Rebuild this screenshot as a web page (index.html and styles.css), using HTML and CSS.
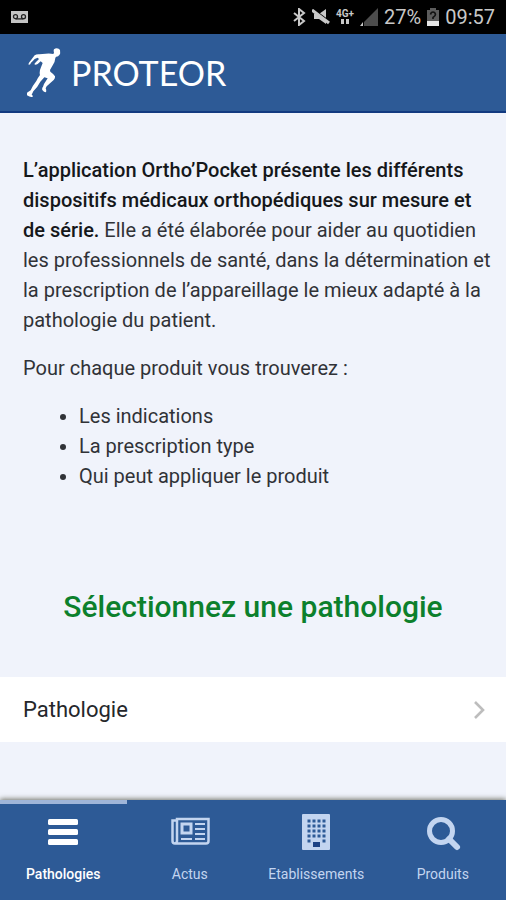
FILE: index.html
```html
<!DOCTYPE html>
<html lang="fr">
<head>
    <meta charset="UTF-8">
    <meta name="viewport" content="width=device-width, initial-scale=1.0">
    <title>Ortho'Pocket</title>
    <link rel="stylesheet" href="styles.css">
</head>
<body>
    <div class="status-bar">
        <svg class="voicemail" width="17" height="12" viewBox="0 0 17 12">
            <rect width="17" height="12" fill="#c4c4c4"/>
            <g fill="none" stroke="#222" stroke-width="1.3">
                <circle cx="4.5" cy="5.7" r="2"/>
                <circle cx="12.5" cy="5.7" r="2"/>
                <path d="M4.5 7.9h8"/>
            </g>
        </svg>
        <div class="status-icons">
            <svg width="13" height="18" viewBox="0 0 13 18">
                <path d="M1 5l10 8-5 4V1l5 4-10 8" fill="none" stroke="#c8c8c8" stroke-width="2"/>
            </svg>
            <svg class="mute" width="18" height="16" viewBox="0 0 18 16">
                <path d="M2 5h5l7-5v15l-7-5H2z" fill="#c8c8c8"/>
                <path d="M2 1l16 12" stroke="#000" stroke-width="2"/>
                <path d="M0 1l17 13" stroke="#c8c8c8" stroke-width="3"/>
            </svg>
            <div class="network">
                <span>4G+</span>
                <svg width="10" height="6" viewBox="0 0 10 6">
                    <path d="M1 0h3v5H1zM6 0h3v5H6z" fill="#c8c8c8"/>
                </svg>
            </div>
            <svg class="signal" width="18" height="18" viewBox="0 0 18 18">
                <path d="M18 0v18H4V14z" fill="#4c4c4c"/>
                <path d="M3 14v4H0z" fill="#c8c8c8"/>
            </svg>
            <span class="status-text">27%</span>
            <svg class="battery" width="12" height="18" viewBox="0 0 12 18">
                <path d="M3 0h6v2h3v16H0V2h3z" fill="#5c5c5c"/>
                <path d="M0 13h12v5H0z" fill="#e6e6e6"/>
                <path d="M3.500 6.500Q4 4 6 4t2.500 2.300Q8.500 8 6 9.500V11" fill="none" stroke="#111" stroke-width="1.6"/>
            </svg>
            <span class="status-text">09:57</span>
        </div>
    </div>

    <header class="header">
        <svg width="34" height="50" viewBox="36 28 102 150" fill="#fff">
            <path d="M117 32Q123 27 131 30Q137 33 135 40Q137 45 133 49Q129 55 123 54L121 58Q120 70 114 78L105 94L106 99Q115 105 120 113Q121 119 116 124L95 143L92 149Q95 156 93 160Q87 162 82 154Q80 149 84 144L87 136L98 119L88 116L76 129Q68 145 55 158L50 168Q55 171 53 174Q47 177 36 170Q33 165 38 161L47 155Q53 141 64 127Q68 118 75 109Q72 99 78 86L83 73L77 68L68 76Q60 80 58 76L63 70L72 61L68 57L59 61Q53 68 48 72Q46 79 41 78Q39 74 46 67L59 50Q65 46 73 47L92 45Q104 43 115 46L117 42Q115 36 117 32Z"/>
        </svg>
        <span class="brand">PROTEOR</span>
    </header>

    <main class="content">
        <section class="intro">
            <p><strong>L’application Ortho’Pocket présente les différents dispositifs médicaux orthopédiques sur mesure et de série.</strong> Elle a été élaborée pour aider au quotidien les professionnels de santé, dans la détermination et la prescription de l’appareillage le mieux adapté à la pathologie du patient.</p>
            <p>Pour chaque produit vous trouverez :</p>
            <ul>
                <li>Les indications</li>
                <li>La prescription type</li>
                <li>Qui peut appliquer le produit</li>
            </ul>
        </section>

        <h2>Sélectionnez une pathologie</h2>

        <a class="list-item" href="#pathologie">
            <span>Pathologie</span>
            <svg width="12" height="18" viewBox="0 0 12 18">
                <path d="M1 1l8 8-8 8" fill="none" stroke="#bdbdbd" stroke-width="2.6"/>
            </svg>
        </a>
    </main>

    <nav class="tabs">
        <a class="tab active" href="#pathologies">
            <svg width="40" height="40" viewBox="0 0 40 40" fill="currentColor">
                <rect x="5" y="7" width="30" height="6" rx="1.5"/>
                <rect x="5" y="17" width="30" height="6" rx="1.5"/>
                <rect x="5" y="27" width="30" height="6" rx="1.5"/>
            </svg>
            <span>Pathologies</span>
        </a>
        <a class="tab" href="#actus">
            <svg width="40" height="40" viewBox="0 0 40 40" fill="none" stroke="currentColor" stroke-width="2.5">
                <path d="M7 8.500H2.500V29Q2.500 31.500 5 31.500H36Q38.500 31.500 38.500 29V7H7V29Q7 31 5 31.500"/>
                <rect x="12" y="12" width="9" height="9" stroke-width="3"/>
                <path d="M25 12h10M25 17h10M25 22h10M11 27h11M25 27h10" stroke-width="2"/>
            </svg>
            <span>Actus</span>
        </a>
        <a class="tab" href="#etablissements">
            <svg width="40" height="40" viewBox="0 0 40 40" fill="none">
                <rect x="6" y="2" width="28" height="36" rx="1" fill="currentColor"/>
                <path d="M11.500 9h18M11.500 14h18M11.500 19h18M11.500 24h18" stroke="#2d5a96" stroke-width="3" stroke-dasharray="3 2"/>
                <path d="M11.500 29h3M26.500 29h3" stroke="#2d5a96" stroke-width="3"/>
                <rect x="17" y="30" width="7" height="5" fill="#1d4385"/>
            </svg>
            <span>Etablissements</span>
        </a>
        <a class="tab" href="#produits">
            <svg width="40" height="40" viewBox="0 0 40 40" fill="none" stroke="currentColor">
                <circle cx="18" cy="19" r="11.500" stroke-width="5"/>
                <path d="M26 27l8 8" stroke-width="6" stroke-linecap="round"/>
            </svg>
            <span>Produits</span>
        </a>
    </nav>
</body>
</html>
```
FILE: styles.css
```css
* {
    box-sizing: border-box;
}
body {
    margin: 0;
    min-height: 100vh;
    display: flex;
    flex-direction: column;
    font-family: Roboto, "Liberation Sans", sans-serif;
    font-size: 20px;
    line-height: 30px;
    color: #303237;
    background-color: #f0f3fb;
}
a {
    color: inherit;
    text-decoration: none;
}
.status-bar {
    display: flex;
    justify-content: space-between;
    align-items: center;
    height: 34px;
    padding: 0 11px;
    background-color: #000;
    color: #c8c8c8;
}
.status-icons {
    display: flex;
    align-items: center;
    gap: 6px;
}
.network {
    display: flex;
    flex-direction: column;
    align-items: center;
    font-size: 10px;
    font-weight: bold;
    line-height: 10px;
}
.status-text {
    font-size: 20px;
}
.header {
    display: flex;
    align-items: center;
    gap: 10px;
    height: 79px;
    padding: 0 27px;
    background-color: #2d5a96;
    border-bottom: 2px solid #123a80;
}
.brand {
    font-family: Lato, sans-serif;
    font-size: 34px;
    line-height: 40px;
    color: #fff;
}
.content {
    flex: 1;
}
.intro {
    padding: 42px 14px 0 23px;
}
.intro p {
    margin: 0 0 18px;
}
.intro ul {
    margin: 0;
    padding-left: 56px;
}
strong {
    font-weight: 500;
    color: #15171a;
}
h2 {
    margin: 96px 0 50px;
    font-size: 30px;
    font-weight: 500;
    line-height: 40px;
    text-align: center;
    color: #0c802c;
}
.list-item {
    display: flex;
    justify-content: space-between;
    align-items: center;
    height: 65px;
    padding: 0 20px 0 23px;
    font-size: 22px;
    color: #25272b;
    background-color: #fff;
}
.tabs {
    position: sticky;
    bottom: 0;
    display: flex;
    background-color: #2d5a96;
    box-shadow: 0 -1px 5px rgba(60, 60, 40, 0.7);
}
.tab {
    flex: 1;
    display: flex;
    flex-direction: column;
    align-items: center;
    gap: 12px;
    padding: 8px 0 16px;
    border-top: 4px solid transparent;
    font-size: 14px;
    line-height: 20px;
    color: #c3d5f0;
}
.tab.active {
    border-top-color: #9fb5d8;
    font-weight: 500;
    color: #fff;
}
```
